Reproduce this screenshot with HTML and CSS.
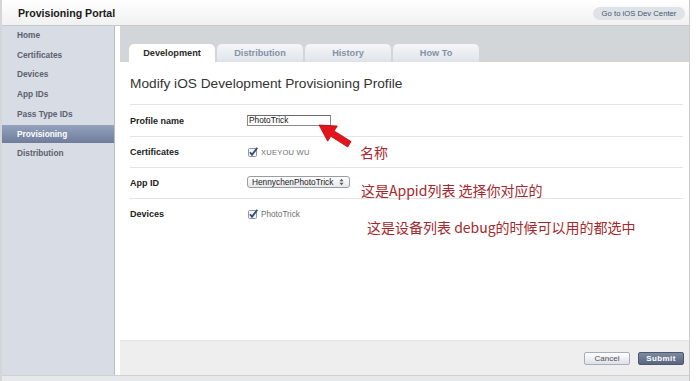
FILE: index.html
```html
<!DOCTYPE html>
<html lang="zh-CN">
<head>
  <meta charset="UTF-8">
  <meta name="viewport" content="width=device-width, initial-scale=1.0">
  <title>Provisioning Portal</title>
  <link rel="stylesheet" href="styles.css">
</head>
<body>

<div class="page">
  <header class="topbar">
    <h1>Provisioning Portal</h1>
    <a class="devcenter" href="#">Go to iOS Dev Center</a>
  </header>

  <div class="layout">
    <nav class="sidebar">
      <ul>
        <li>Home</li>
        <li>Certificates</li>
        <li>Devices</li>
        <li>App IDs</li>
        <li>Pass Type IDs</li>
        <li class="active">Provisioning</li>
        <li>Distribution</li>
      </ul>
    </nav>

    <main class="main">
      <div class="panel">
        <div class="tabs">
          <span class="tab current">Development</span>
          <span class="tab">Distribution</span>
          <span class="tab">History</span>
          <span class="tab">How To</span>
        </div>

        <div class="content">
          <h2>Modify iOS Development Provisioning Profile</h2>
          <div class="row">
            <label>Profile name</label>
            <input class="text-field" type="text" value="PhotoTrick">
          </div>
          <div class="row">
            <label>Certificates</label>
            <span class="check">
              <svg width="10" height="10" viewBox="0 0 10 10"><rect x="0.5" y="1.5" width="8" height="8" rx="1" fill="#f4f6f9" stroke="#8d96a6"/><path d="M2 5.2 L4 7.8 L9.3 0.8" fill="none" stroke="#2c4a7c" stroke-width="1.8"/></svg>
              <span class="check-text caps">XUEYOU WU</span>
            </span>
          </div>
          <div class="row">
            <label>App ID</label>
            <span class="select">
              HennychenPhotoTrick
              <svg width="5" height="8" viewBox="0 0 5 8"><path d="M0.5 3.2 L2.5 0.8 L4.5 3.2 Z M0.5 4.8 L2.5 7.2 L4.5 4.8 Z" fill="#555"/></svg>
            </span>
          </div>
          <div class="row">
            <label>Devices</label>
            <span class="check">
              <svg width="10" height="10" viewBox="0 0 10 10"><rect x="0.5" y="1.5" width="8" height="8" rx="1" fill="#f4f6f9" stroke="#8d96a6"/><path d="M2 5.2 L4 7.8 L9.3 0.8" fill="none" stroke="#2c4a7c" stroke-width="1.8"/></svg>
              <span class="check-text">PhotoTrick</span>
            </span>
          </div>
        </div>

        <div class="actions">
          <button class="btn cancel">Cancel</button>
          <button class="btn submit">Submit</button>
        </div>
      </div>
    </main>
  </div>

  <div class="bottom-strip"></div>

  <!-- annotations drawn over the screenshot -->
  <svg class="arrow" width="45" height="40" viewBox="310 112 45 40">
    <polygon points="318,124 336.3,125 333.2,129.9 350.1,140.6 346.7,146 329.8,135.3 326.7,140.2" fill="#e4141c" stroke="#b40d12" stroke-width="0.8" stroke-linejoin="round"/>
  </svg>
  <span class="note note-name">名称</span>
  <span class="note note-appid">这是Appid列表 选择你对应的</span>
  <span class="note note-devices">这是设备列表 debug的时候可以用的都选中</span>
</div>

</body>
</html>
```

FILE: styles.css
```css
body {
  margin: 0;
  padding: 0;
  background-color: #fff;
  font-family: "Liberation Sans", Arial, sans-serif;
  color: #222;
}
.page {
  position: relative;
  width: 687px;
  height: 381px;
  border-left: 2px solid #d4d6da;
  border-right: 1px solid #c9cbcf;
  display: flex;
  flex-direction: column;
}

/* top bar */
.topbar {
  height: 25px;
  border-bottom: 1px solid #c6c8cc;
  background: linear-gradient(#ffffff, #f1f1f2);
  display: flex;
  align-items: center;
  justify-content: space-between;
  padding: 0 4px 0 16px;
}
.topbar h1 {
  margin: 0;
  font-size: 10.6px;
  font-weight: bold;
  color: #1a1a1a;
}
.devcenter {
  width: 92px;
  height: 13px;
  line-height: 13px;
  margin-top: 2px;
  text-align: center;
  font-size: 7.7px;
  color: #45546c;
  text-decoration: none;
  background-color: #dfe3e8;
  border-radius: 7px;
}

/* body */
.layout {
  flex: 1;
  display: flex;
}
.sidebar {
  width: 112px;
  background-color: #d8dce5;
  border-right: 1px solid #b9bcc2;
}
.sidebar ul {
  list-style: none;
  margin: 0;
  padding: 0;
}
.sidebar li {
  height: 19.7px;
  line-height: 19.7px;
  padding-left: 15px;
  font-size: 8.3px;
  font-weight: bold;
  color: #5b606d;
}
.sidebar li.active {
  margin-top: 0.5px;
  height: 18px;
  line-height: 18px;
  margin-bottom: 1px;
  color: #fff;
  background: linear-gradient(#95a2bd, #6f7d9b);
}

.main {
  flex: 1;
  padding-left: 5px;
  background-color: #fff;
  display: flex;
}
.panel {
  flex: 1;
  display: flex;
  flex-direction: column;
}

/* tabs */
.tabs {
  height: 18px;
  padding: 18px 0 0 9px;
  background-color: #d3d6d9;
  display: flex;
  gap: 2px;
}
.tab {
  width: 86px;
  height: 18px;
  line-height: 19px;
  text-align: center;
  font-size: 9.2px;
  font-weight: bold;
  color: #8692a6;
  border-radius: 5px 5px 0 0;
  background: linear-gradient(#f5f6f8, #dfe3e9);
}
.tab.current {
  color: #2b2b2b;
  background: #fff;
}

/* form */
.content {
  flex: 1;
  padding: 14px 6px 0 10px;
}
.content h2 {
  margin: 0 0 12px;
  height: 16px;
  line-height: 16px;
  font-size: 13.7px;
  font-weight: normal;
  color: #333;
}
.row {
  height: 30px;
  border-top: 1px solid #e4e4e4;
  display: flex;
  align-items: center;
}
.row:first-of-type {
  height: 31px;
}
.row label {
  width: 117px;
  font-size: 9px;
  font-weight: bold;
  color: #222;
}
.text-field {
  box-sizing: border-box;
  width: 84px;
  height: 11px;
  margin: -1px 0 0;
  padding: 0 1px;
  border: 1px solid #8a8a8a;
  border-top-color: #6a6a6a;
  font-family: "Liberation Sans", Arial, sans-serif;
  font-size: 8.3px;
  color: #111;
}
.check {
  display: flex;
  align-items: center;
  gap: 3px;
  padding-left: 1px;
}
.check-text {
  font-size: 8.2px;
  color: #6e6e6e;
}
.caps {
  font-size: 7.6px;
  letter-spacing: 0.2px;
}
.select {
  box-sizing: border-box;
  width: 103px;
  height: 12px;
  margin-top: -2px;
  padding: 0 5px 0 4px;
  display: flex;
  align-items: center;
  justify-content: space-between;
  font-size: 8.3px;
  color: #222;
  border: 1px solid #9a9da3;
  border-radius: 3px;
  background: linear-gradient(#ffffff, #e6e7ea);
}

/* footer */
.actions {
  height: 34px;
  border-top: 1px solid #e6e6e6;
  background-color: #eeeeee;
  display: flex;
  justify-content: flex-end;
  align-items: flex-start;
  gap: 8px;
  padding: 0 5px 0 0;
}
.btn {
  margin-top: 11px;
  width: 46px;
  height: 13px;
  padding: 0;
  font-family: "Liberation Sans", Arial, sans-serif;
  font-size: 8px;
  line-height: 11px;
  border-radius: 2px;
  cursor: pointer;
}
.cancel {
  color: #4a4f58;
  border: 1px solid #a8aeb8;
  background: linear-gradient(#ffffff, #dde1e8);
}
.submit {
  color: #fff;
  font-weight: bold;
  letter-spacing: 0.4px;
  border: 1px solid #4d586c;
  background: linear-gradient(#7d8aa0, #5a667d);
}

.bottom-strip {
  height: 5px;
  border-top: 1px solid #cfd1d5;
  background-color: #e7e8eb;
}

/* red notes */
.arrow {
  position: absolute;
  left: 309px;
  top: 113px;
}
.note {
  position: absolute;
  font-family: "Noto Sans CJK SC", sans-serif;
  font-size: 14px;
  line-height: 16px;
  color: #a5282c;
  white-space: nowrap;
}
.note-name {
  left: 358px;
  top: 144px;
}
.note-appid {
  left: 359px;
  top: 182px;
}
.note-devices {
  left: 365px;
  top: 219px;
}
```
